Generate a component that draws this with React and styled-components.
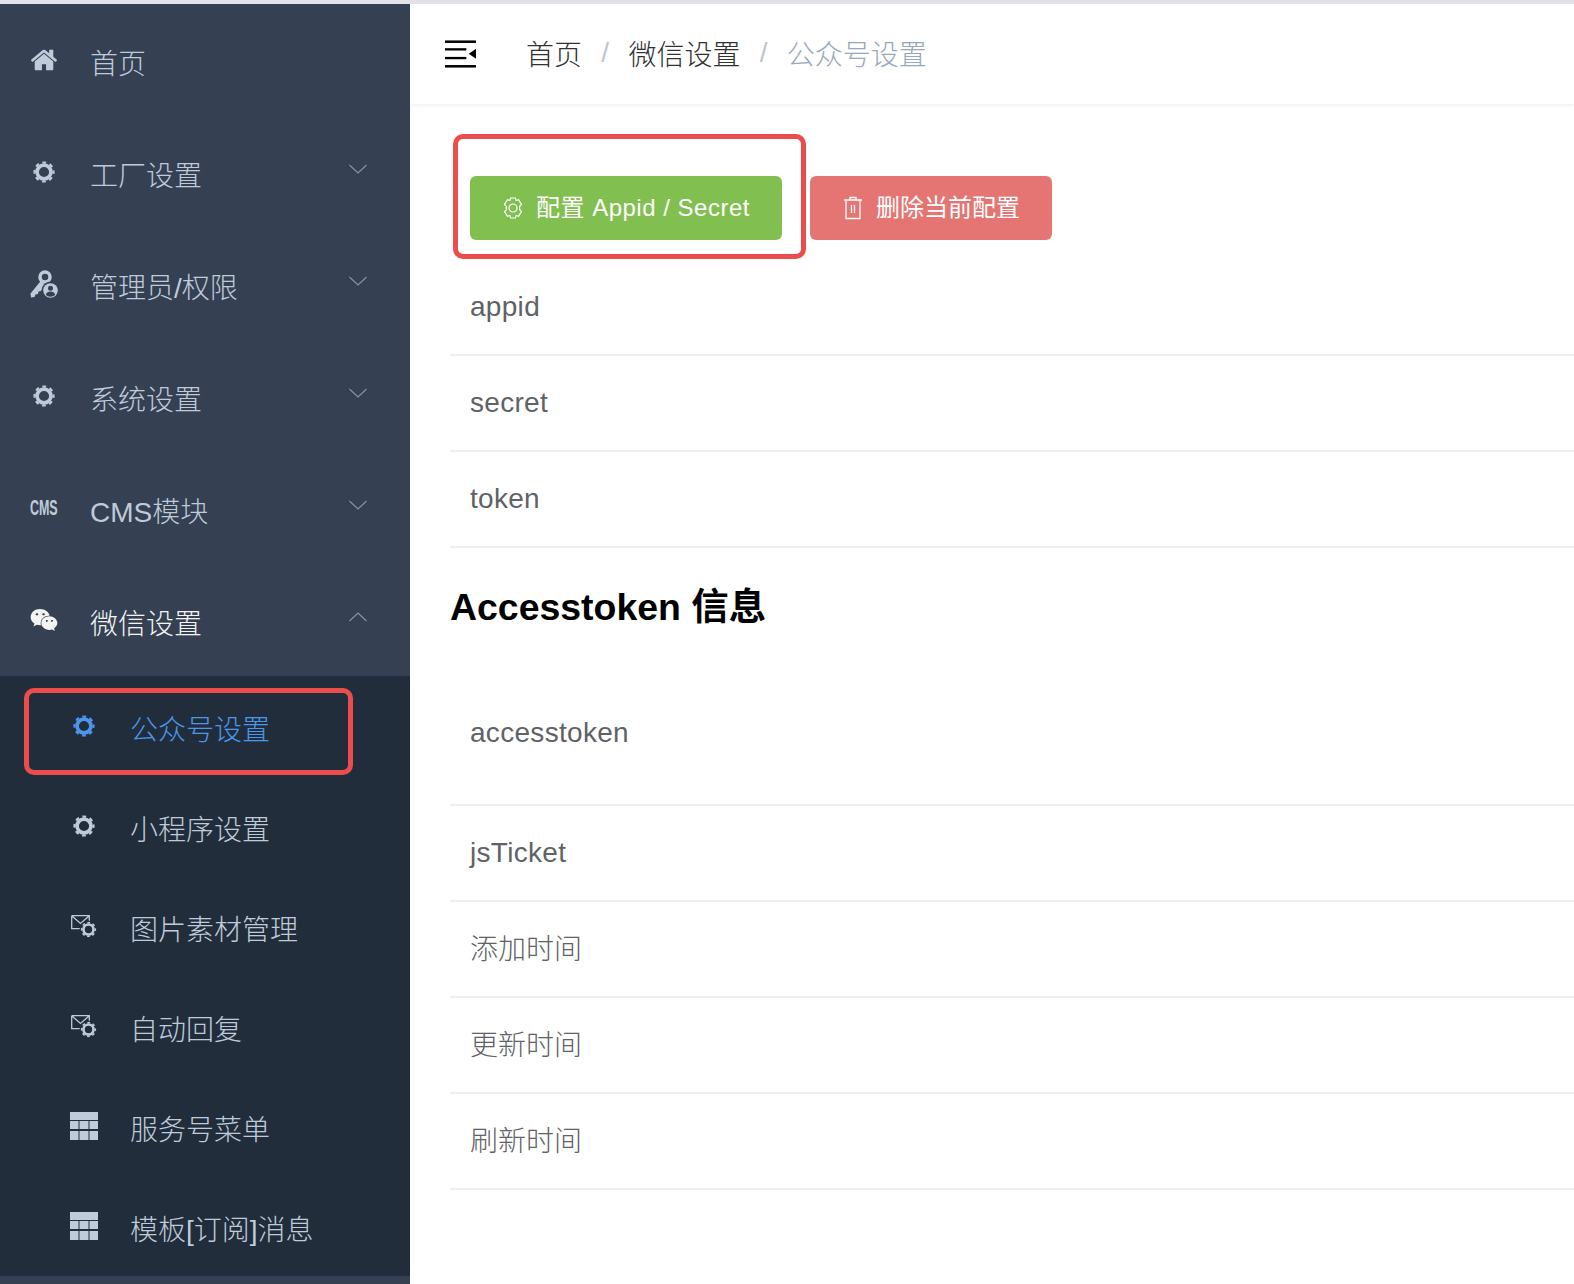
import React from 'react';
import styled, { createGlobalStyle } from 'styled-components';
import { FaWeixin } from 'react-icons/fa';

const FONT = `"Liberation Sans", "Noto Sans CJK SC", sans-serif`;

const GlobalStyle = createGlobalStyle`
  html, body {
    margin: 0;
    padding: 0;
    background: #fff;
    font-family: ${FONT};
  }
`;

const Page = styled.div`
  width: 1574px;
  height: 1284px;
  overflow: hidden;
  position: relative;
  border-top: 4px solid #e1e1e8;
  box-sizing: border-box;
  display: grid;
  grid-template-columns: 410px 1fr;
`;

const Sidebar = styled.aside`
  background: #354052;
  height: 100%;
  position: relative;
`;

const MenuRow = styled.div`
  height: 112px;
  display: flex;
  align-items: center;
  padding: 4px 43px 0 30px;
  box-sizing: border-box;
  font-size: 28px;
  font-weight: 300;
  color: ${(p) => (p.$open ? '#f4f4f5' : '#bfcbd9')};
`;

const SubMenu = styled.div`
  background: #222d3b;
`;

const SubRow = styled.div`
  height: 100px;
  display: flex;
  align-items: center;
  padding: 4px 0 0 70px;
  box-sizing: border-box;
  font-size: 28px;
  font-weight: 300;
  color: ${(p) => (p.$active ? '#4b97ec' : '#bfcbd9')};
`;

const IconSlot = styled.span`
  width: 28px;
  height: 28px;
  margin-right: 32px;
  margin-top: -4px;
  flex: none;
  display: flex;
  align-items: center;
  justify-content: center;
`;

const CmsMark = styled.span`
  font-size: 16px;
  font-weight: 700;
  font-family: "Liberation Sans", sans-serif;
  transform: scaleX(0.78) scaleY(1.35);
  white-space: nowrap;
`;

const Label = styled.span`
  flex: 1;
  white-space: nowrap;
`;

const Chevron = styled.svg`
  width: 18px;
  height: 10px;
  margin-top: -10px;
  fill: none;
  stroke: #8a919c;
  stroke-width: 1.2;
`;

const Main = styled.main`
  min-width: 0;
  background: #fff;
`;

const Header = styled.header`
  height: 100px;
  display: flex;
  align-items: center;
  padding: 0 0 0 35px;
  box-shadow: 0 1px 4px rgba(0, 21, 41, 0.08);
`;

const Burger = styled.svg`
  width: 31px;
  height: 28px;
  margin-right: 50px;
  margin-top: -1px;
`;

const Crumbs = styled.nav`
  display: flex;
  align-items: center;
  margin-top: -2px;
`;

const Crumb = styled.span`
  font-size: 28px;
  font-weight: 300;
  color: ${(p) => (p.$last ? '#97a8be' : '#303133')};
`;

const CrumbSep = styled.span`
  font-size: 28px;
  font-weight: 400;
  color: #c0c4cc;
  margin: 0 19.3px;
`;

const Content = styled.div`
  padding: 72px 0 0 40px;
`;

const Actions = styled.div`
  display: flex;
  gap: 28px;
  padding-left: 20px;
  margin-bottom: 20px;
`;

const ActionButton = styled.button`
  height: 64px;
  border: 0;
  border-radius: 6px;
  padding: 0 32px;
  display: flex;
  align-items: center;
  gap: 12px;
  color: #fff;
  font-family: ${FONT};
  font-size: 24px;
  background: ${(p) => p.$bg};
`;

const ButtonText = styled.span`
  margin-top: -5px;
  letter-spacing: ${(p) => (p.$latin ? '0.5px' : '0')};
`;

const InfoRow = styled.div`
  height: ${(p) => p.$tall || 96}px;
  display: flex;
  align-items: center;
  padding-left: 20px;
  padding-bottom: ${(p) => p.$lift || 0}px;
  box-sizing: border-box;
  border-bottom: 2px solid #ebeef5;
  font-size: 28px;
  font-weight: 300;
  letter-spacing: ${(p) => (p.$lift === 4 ? '0' : '0.3px')};
  color: #606266;
`;

const SectionTitle = styled.h2`
  margin: 0;
  height: 120px;
  padding-bottom: 8px;
  box-sizing: border-box;
  display: flex;
  align-items: center;
  font-size: 37.44px;
  font-weight: 700;
  color: #000;
`;

const Callout = styled.div`
  position: absolute;
  box-sizing: border-box;
  border: 5px solid #eb4c4c;
  border-radius: 10px;
  left: ${(p) => p.$x}px;
  top: ${(p) => p.$y}px;
  width: ${(p) => p.$w}px;
  height: ${(p) => p.$h}px;
`;

const HOME = 'M1472 992v480q0 26-19 45t-45 19h-384v-384h-256v384h-384q-26 0-45-19t-19-45v-480q0-1 .5-3t.5-3l575-474 575 474q1 2 1 6zm223-69l-62 74q-8 9-21 11h-3q-13 0-21-7l-692-577-692 577q-12 8-24 7-13-2-21-11l-62-74q-8-10-7-23.500t11-21.500l719-599q32-26 76-26t76 26l244 204v-195q0-14 9-23t23-9h192q14 0 23 9t9 23v408l219 182q10 8 11 21.500t-7 23.500z';

// ring plus eight short teeth, the small cog the menu uses everywhere
const CogRing = () => (
  <>
    <circle cx="11" cy="11" r="6.900" fill="none" stroke="currentColor" strokeWidth="3.600" />
    <circle cx="11" cy="11" r="9.500" fill="none" stroke="currentColor" strokeWidth="2.200" strokeDasharray="3.800 3.661" strokeDashoffset="1.900" />
  </>
);

const CogIcon = () => (
  <svg width="22" height="22" viewBox="0 0 22 22"><CogRing /></svg>
);

const HomeIcon = () => (
  <svg width="26" height="26" viewBox="90 90 1612 1612" fill="currentColor"><path d={HOME} /></svg>
);

const Down = () => (
  <Chevron viewBox="0 0 18 10"><path d="M.5 1L9 9l8.500-8" /></Chevron>
);
const Up = () => (
  <Chevron viewBox="0 0 18 10"><path d="M.5 9L9 1l8.500 8" /></Chevron>
);

const KeyUser = () => (
  <svg width="28" height="28" viewBox="0 0 28 28" fill="#bfcbd9">
    <circle cx="15" cy="7" r="5" fill="none" stroke="#bfcbd9" strokeWidth="3.500" />
    <path d="M11.500 10L.5 23.500 1 27.500l3.500-.5 1-2.500 2.500-.5.5-2.500 2.500-.5 4-5z" />
    <circle cx="20.500" cy="20.500" r="9" fill="#354052" />
    <circle cx="20.500" cy="20.500" r="7.300" />
    <circle cx="20.500" cy="18.200" r="2.500" fill="#354052" />
    <path d="M15.800 25c.6-2.800 2.600-3.400 4.700-3.400s4.100.6 4.700 3.400a7 7 0 0 1-9.400 0z" fill="#354052" />
  </svg>
);

const MailCog = () => (
  <svg width="26" height="24" viewBox="0 0 26 24" style={{ overflow: 'visible', marginTop: 2, color: '#bfcbd9' }}>
    <path d="M.7.7h17.600v7M.7.7v13h8.500M1 1l8.500 7.500L18 1" fill="none" stroke="#bfcbd9" strokeWidth="1.300" />
    <circle cx="17.500" cy="14.500" r="9" fill="#222d3b" />
    <svg x="9.500" y="6.500" width="16" height="16" viewBox="0 0 22 22"><CogRing /></svg>
  </svg>
);

const GridIcon = () => (
  <svg width="28" height="28" viewBox="0 0 28 28" fill="#bfcbd9">
    <rect width="28" height="8" />
    <rect y="9" width="8.500" height="8" />
    <rect x="9.500" y="9" width="9" height="8" />
    <rect x="19.500" y="9" width="8.500" height="8" />
    <rect y="19" width="8.500" height="9" />
    <rect x="9.500" y="19" width="9" height="9" />
    <rect x="19.500" y="19" width="8.500" height="9" />
  </svg>
);

const BurgerIcon = () => (
  <Burger viewBox="0 0 32 28" fill="#000">
    <rect width="32" height="2.600" />
    <rect y="8" width="22" height="2.400" />
    <rect y="17" width="22" height="2.400" />
    <rect y="25.400" width="32" height="2.600" />
    <path d="M24.500 13.700L32 8.500v10.500z" />
  </Burger>
);

const GearOutline = () => (
  <svg width="22" height="22" viewBox="0 0 22 22" fill="none" stroke="#fff" strokeWidth="1.200">
    <circle cx="11" cy="11" r="4" />
    <path d="M8.600 1h4.800l.7 2.600 2.500-.8 2.900 4.600-1.900 1.900v3.400l1.900 1.900-2.900 4.600-2.500-.8-.7 2.600H8.600l-.7-2.600-2.500.8-2.900-4.600 1.900-1.900V9.400L2.500 7.400l2.900-4.600 2.500.8z" />
  </svg>
);

const TrashOutline = () => (
  <svg width="22" height="24" viewBox="0 0 22 24" fill="none" stroke="#fff" strokeWidth="1.300">
    <path d="M2 4h18M8 4V1.500h6V4M4 4v18.500h14V4M9.500 9v8M12.500 9v8" />
  </svg>
);

const mainMenu = [
  { label: '工厂设置', icon: <CogIcon /> },
  { label: '管理员/权限', icon: <KeyUser /> },
  { label: '系统设置', icon: <CogIcon /> },
  { label: 'CMS模块', icon: <CmsMark>CMS</CmsMark> },
];

const subMenu = [
  { label: '公众号设置', icon: <CogIcon />, active: true },
  { label: '小程序设置', icon: <CogIcon /> },
  { label: '图片素材管理', icon: <MailCog /> },
  { label: '自动回复', icon: <MailCog /> },
  { label: '服务号菜单', icon: <GridIcon /> },
  { label: '模板[订阅]消息', icon: <GridIcon /> },
];

const App = () => (
  <Page>
    <GlobalStyle />
    <Sidebar>
      <MenuRow>
        <IconSlot><HomeIcon /></IconSlot>
        <Label>首页</Label>
      </MenuRow>
      {mainMenu.map((item) => (
        <MenuRow key={item.label}>
          <IconSlot>{item.icon}</IconSlot>
          <Label>{item.label}</Label>
          <Down />
        </MenuRow>
      ))}
      <MenuRow $open>
        <IconSlot><FaWeixin size={30} /></IconSlot>
        <Label>微信设置</Label>
        <Up />
      </MenuRow>
      <SubMenu>
        {subMenu.map((item) => (
          <SubRow key={item.label} $active={item.active}>
            <IconSlot>{item.icon}</IconSlot>
            <Label>{item.label}</Label>
          </SubRow>
        ))}
      </SubMenu>
    </Sidebar>
    <Main>
      <Header>
        <BurgerIcon />
        <Crumbs>
          <Crumb>首页</Crumb>
          <CrumbSep>/</CrumbSep>
          <Crumb>微信设置</Crumb>
          <CrumbSep>/</CrumbSep>
          <Crumb $last>公众号设置</Crumb>
        </Crumbs>
      </Header>
      <Content>
        <Actions>
          <ActionButton $bg="#81c050"><GearOutline /><ButtonText $latin>配置 Appid / Secret</ButtonText></ActionButton>
          <ActionButton $bg="#e57573"><TrashOutline /><ButtonText>删除当前配置</ButtonText></ActionButton>
        </Actions>
        <InfoRow>appid</InfoRow>
        <InfoRow>secret</InfoRow>
        <InfoRow>token</InfoRow>
        <SectionTitle>Accesstoken 信息</SectionTitle>
        <InfoRow $tall={138} $lift={6}>accesstoken</InfoRow>
        <InfoRow>jsTicket</InfoRow>
        <InfoRow $lift={4}>添加时间</InfoRow>
        <InfoRow $lift={4}>更新时间</InfoRow>
        <InfoRow $lift={4}>刷新时间</InfoRow>
      </Content>
    </Main>
    <Callout $x={453} $y={130} $w={353} $h={125} />
    <Callout $x={24} $y={684} $w={329} $h={87} />
  </Page>
);

export default App;
